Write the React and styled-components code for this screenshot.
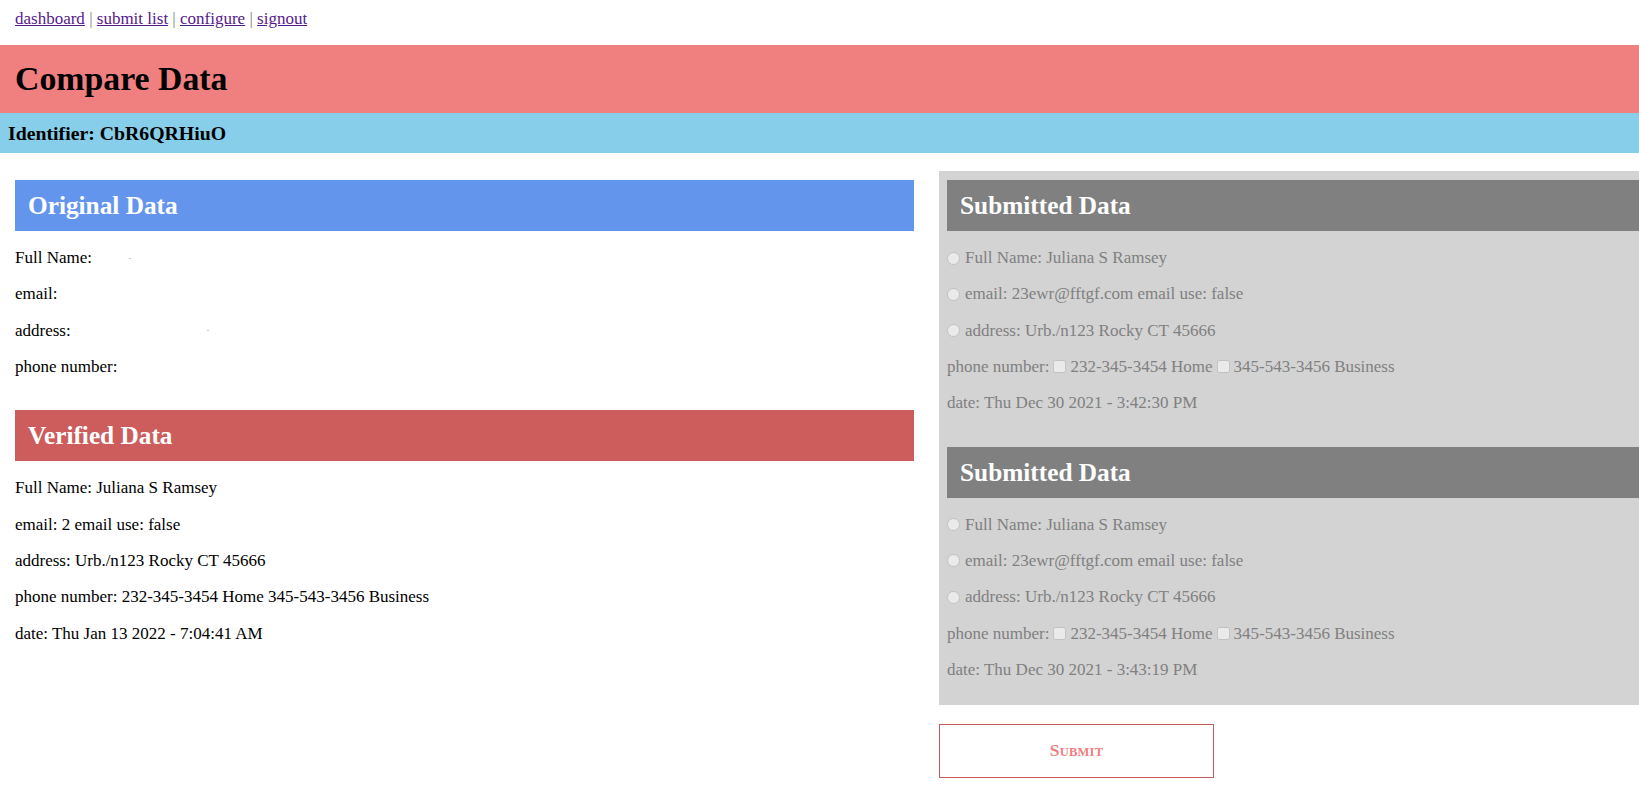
import React from 'react';
import styled, { createGlobalStyle } from 'styled-components';

const GlobalStyle = createGlobalStyle`
    html, body {
        margin: 0;
        padding: 0;
        background: #ffffff;
        overflow-x: hidden;
    }
    body {
        font-family: "Liberation Serif", "Times New Roman", serif;
        font-size: 17px;
        color: #000000;
    }
`;

const Nav = styled.nav`
    padding: 8px 15px 15px;
    line-height: 22px;
    font-size: 17px;
    color: #808080;
`;

const NavLink = styled.a`
    color: #551a8b;
    text-decoration: underline;
`;

const Banner = styled.header`
    background: #f08080;
    height: 68px;
    display: flex;
    align-items: center;
    padding: 0 15px;
    box-sizing: border-box;

    h1 {
        margin: 0;
        font-size: 33.8px;
        font-weight: bold;
        line-height: 40px;
    }
`;

const IdentifierBar = styled.div`
    background: #87ceeb;
    height: 40px;
    display: flex;
    align-items: center;
    padding: 0 8px;

    h3 {
        margin: 0;
        font-size: 19.8px;
        font-weight: bold;
    }
`;

const Main = styled.main`
    display: flex;
    align-items: flex-start;
    margin-top: 18px;
`;

const LeftColumn = styled.div`
    width: 899px;
    flex: none;
    margin-left: 15px;
    padding-top: 9px;
`;

const RightColumn = styled.div`
    width: 916px;
    flex: none;
    margin-left: 25px;
`;

const Panel = styled.div`
    background: #d3d3d3;
    color: #808080;
    padding: 9px 8px 25px;
`;

const Section = styled.section`
    & + & {
        margin-top: 33.5px;
    }
`;

const SectionHeader = styled.h2`
    margin: 0;
    height: 51px;
    line-height: 51px;
    padding: 0 13px;
    font-size: 25.3px;
    font-weight: bold;
    color: #ffffff;
    background: ${p => p.$bg};
`;

const Rows = styled.div`
    display: flex;
    flex-direction: column;
    gap: 16.3px;
    padding-top: 17px;
`;

const Row = styled.div`
    line-height: 20px;
    height: 20px;
    white-space: nowrap;
    display: flex;
    align-items: center;
`;

const Radio = styled.input.attrs({ type: 'radio', disabled: true })`
    width: 13px;
    height: 13px;
    margin: 0 5px 0 0;
`;

const Check = styled.input.attrs({ type: 'checkbox', disabled: true })`
    width: 13px;
    height: 13px;
    margin: 0 4px;
`;

const Speck = styled.span`
    display: inline-block;
    width: 2px;
    height: 1px;
    background: #c8c8c8;
    margin-left: ${p => p.$offset}px;
`;

const SubmitButton = styled.button`
    margin-top: 19px;
    width: 275px;
    height: 54px;
    padding: 0;
    background: #ffffff;
    border: 1px solid #c45a5a;
    border-radius: 0;
    color: #f08080;
    font-family: "Liberation Serif", "Times New Roman", serif;
    font-size: 17.5px;
    font-weight: 700;
    letter-spacing: 0.2px;
    cursor: pointer;
`;

const SmallCap = styled.span`
    font-size: 0.72em;
    font-weight: 700;
`;

const submissions = [
  { date: 'Thu Dec 30 2021 - 3:42:30 PM' },
  { date: 'Thu Dec 30 2021 - 3:43:19 PM' },
];

function SubmittedSection({ date }) {
  return (
    <Section>
      <SectionHeader $bg="#808080">Submitted Data</SectionHeader>
      <Rows>
        <Row><Radio name={date} />Full Name: Juliana S Ramsey</Row>
        <Row><Radio name={date} />email: 23ewr@fftgf.com email use: false</Row>
        <Row><Radio name={date} />address: Urb./n123 Rocky CT 45666</Row>
        <Row>
          phone number:<Check />232-345-3454 Home<Check />345-543-3456 Business
        </Row>
        <Row>date: {date}</Row>
      </Rows>
    </Section>
  );
}

export default function App() {
  return (
    <>
      <GlobalStyle />
      <Nav>
        <NavLink href="#">dashboard</NavLink> | <NavLink href="#">submit list</NavLink> |{' '}
        <NavLink href="#">configure</NavLink> | <NavLink href="#">signout</NavLink>
      </Nav>
      <Banner>
        <h1>Compare Data</h1>
      </Banner>
      <IdentifierBar>
        <h3>Identifier: CbR6QRHiuO</h3>
      </IdentifierBar>
      <Main>
        <LeftColumn>
          <Section>
            <SectionHeader $bg="#6495ed">Original Data</SectionHeader>
            <Rows>
              <Row>Full Name:<Speck $offset={37} /></Row>
              <Row>email:</Row>
              <Row>address:<Speck $offset={136} /></Row>
              <Row>phone number:</Row>
            </Rows>
          </Section>
          <Section>
            <SectionHeader $bg="#cd5c5c">Verified Data</SectionHeader>
            <Rows>
              <Row>Full Name: Juliana S Ramsey</Row>
              <Row>email: 2 email use: false</Row>
              <Row>address: Urb./n123 Rocky CT 45666</Row>
              <Row>phone number: 232-345-3454 Home 345-543-3456 Business</Row>
              <Row>date: Thu Jan 13 2022 - 7:04:41 AM</Row>
            </Rows>
          </Section>
        </LeftColumn>
        <RightColumn>
          <Panel>
            {submissions.map(s => (
              <SubmittedSection key={s.date} date={s.date} />
            ))}
          </Panel>
          <SubmitButton>S<SmallCap>UBMIT</SmallCap></SubmitButton>
        </RightColumn>
      </Main>
    </>
  );
}
